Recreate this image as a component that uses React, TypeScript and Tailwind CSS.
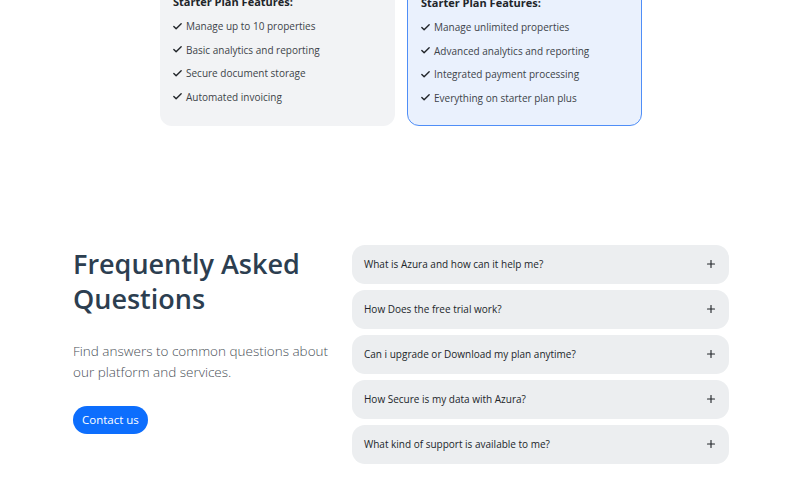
import React from "react";
import { Check, Plus } from "lucide-react";

const starterFeatures = [
  "Manage up to 10 properties",
  "Basic analytics and reporting",
  "Secure document storage",
  "Automated invoicing",
];

const proFeatures = [
  "Manage unlimited properties",
  "Advanced analytics and reporting",
  "Integrated payment processing",
  "Everything on starter plan plus",
];

const faqs = [
  "What is Azura and how can it help me?",
  "How Does the free trial work?",
  "Can i upgrade or Download my plan anytime?",
  "How Secure is my data with Azura?",
  "What kind of support is available to me?",
];

function FeatureCard({ items, highlighted }: { items: string[]; highlighted?: boolean }) {
  return (
    <div
      className={
        highlighted
          ? "w-[235px] rounded-[12px] border border-[#4f8ef7] bg-[#eaf1fd] px-[13px] pb-[20px] pt-[16px]"
          : "w-[235px] rounded-[12px] bg-[#f2f3f5] px-[13px] pb-[21px] pt-[16px]"
      }
    >
      <p className="text-[11px] font-bold leading-[14px] text-[#212529]">Starter Plan Features:</p>
      <ul className="mt-[10px] flex flex-col gap-[9.5px]">
        {items.map((item) => (
          <li key={item} className="flex items-center gap-[3px] text-[10px] leading-[14px] text-[#3d4349]">
            <Check size={11} strokeWidth={3} className="-ml-[1px] text-[#212529]" />
            {item}
          </li>
        ))}
      </ul>
    </div>
  );
}

export default function App() {
  return (
    <div className="h-[500px] overflow-hidden bg-white font-['Open_Sans',sans-serif]">
      <div className="-mt-[21px] ml-[160px] flex gap-[12px]">
        <FeatureCard items={starterFeatures} />
        <FeatureCard items={proFeatures} highlighted />
      </div>

      <section className="ml-[73px] mt-[119px] flex w-[656px] justify-between">
        <div className="w-[265px] pt-[1px]">
          <h2 className="text-[27px] font-semibold leading-[35px] text-[#2c3e50]">
            Frequently Asked Questions
          </h2>
          <p className="mt-[25px] text-[13.5px] font-light leading-[21px] text-[#495057]">
            Find answers to common questions about our platform and services.
          </p>
          <button className="mt-[23px] h-[28px] rounded-full bg-[#0d6efd] px-[9px] text-[11.5px] text-white">
            Contact us
          </button>
        </div>

        <div className="flex w-[377px] flex-col gap-[6px]">
          {faqs.map((q) => (
            <div
              key={q}
              className="flex h-[39px] items-center justify-between rounded-[13px] bg-[#eceef0] pl-[12px] pr-[12px]"
            >
              <span className="text-[10px] text-[#212529]">{q}</span>
              <Plus size={12} strokeWidth={2.25} className="text-[#212529]" />
            </div>
          ))}
        </div>
      </section>
    </div>
  );
}
